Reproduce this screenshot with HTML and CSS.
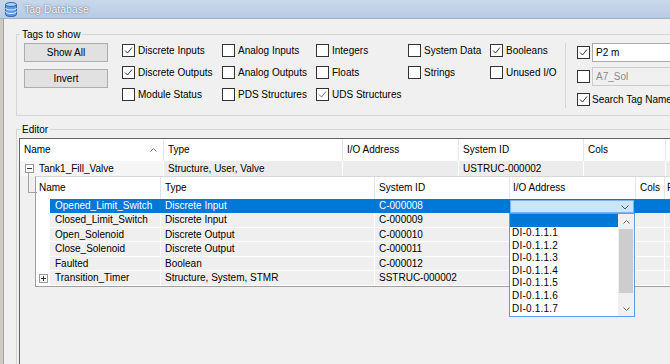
FILE: index.html
```html
<!DOCTYPE html>
<html lang="en">
<head>
  <meta charset="UTF-8">
  <title>Tag Database</title>
  <link rel="stylesheet" href="styles.css">
</head>
<body>

  <div class="titlebar">
    <svg class="app-icon" width="12" height="15" viewBox="0 0 12 15">
      <path d="M0.5 2.5 v10 a5.5 2 0 0 0 11 0 v-10" fill="#5d9be0" stroke="#2f68b0"/>
      <ellipse cx="6" cy="2.5" rx="5.5" ry="2" fill="#a9d0f5" stroke="#2f68b0"/>
      <path d="M0.5 6 a5.5 2 0 0 0 11 0 M0.5 9.5 a5.5 2 0 0 0 11 0" fill="none" stroke="#e2effc"/>
    </svg>
    <span>Tag Database</span>
  </div>

  <div class="frame">
    <div class="client">

      <fieldset class="group tags">
        <legend>Tags to show</legend>
        <div class="tags-body">
          <div class="buttons">
            <button>Show All</button>
            <button>Invert</button>
          </div>

          <div class="filters">
            <div class="col w1">
              <label class="check"><span class="box"><svg width="11" height="11" viewBox="0 0 11 11"><path d="M2 5.5 L4.5 8 L9 2.5" fill="none" stroke="#333"/></svg></span>Discrete Inputs</label>
              <label class="check"><span class="box"><svg width="11" height="11" viewBox="0 0 11 11"><path d="M2 5.5 L4.5 8 L9 2.5" fill="none" stroke="#333"/></svg></span>Discrete Outputs</label>
              <label class="check"><span class="box"></span>Module Status</label>
            </div>
            <div class="col w2">
              <label class="check"><span class="box"></span>Analog Inputs</label>
              <label class="check"><span class="box"></span>Analog Outputs</label>
              <label class="check"><span class="box"></span>PDS Structures</label>
            </div>
            <div class="col w3">
              <label class="check"><span class="box"></span>Integers</label>
              <label class="check"><span class="box"></span>Floats</label>
              <label class="check"><span class="box"><svg width="11" height="11" viewBox="0 0 11 11"><path d="M2 5.5 L4.5 8 L9 2.5" fill="none" stroke="#777"/></svg></span>UDS Structures</label>
            </div>
            <div class="col w4">
              <label class="check"><span class="box"></span>System Data</label>
              <label class="check"><span class="box"></span>Strings</label>
            </div>
            <div class="col w5">
              <label class="check"><span class="box"><svg width="11" height="11" viewBox="0 0 11 11"><path d="M2 5.5 L4.5 8 L9 2.5" fill="none" stroke="#333"/></svg></span>Booleans</label>
              <label class="check"><span class="box"></span>Unused I/O</label>
            </div>
          </div>

          <div class="search">
            <div class="search-row">
              <span class="box"><svg width="11" height="11" viewBox="0 0 11 11"><path d="M2 5.5 L4.5 8 L9 2.5" fill="none" stroke="#333"/></svg></span>
              <div class="textbox">P2 m</div>
            </div>
            <div class="search-row">
              <span class="box"></span>
              <div class="textbox disabled">A7_Sol</div>
            </div>
            <div class="search-row">
              <span class="box"><svg width="11" height="11" viewBox="0 0 11 11"><path d="M2 5.5 L4.5 8 L9 2.5" fill="none" stroke="#333"/></svg></span>
              <span>Search Tag Names</span>
            </div>
          </div>
        </div>
      </fieldset>

      <fieldset class="group editor">
        <legend>Editor</legend>
        <div class="grid">
          <div class="row outer head">
            <div class="cell name-head">Name
              <svg width="7" height="4" viewBox="0 0 7 4"><path d="M0.5 3.5 L3.5 0.5 L6.5 3.5" fill="none" stroke="#6a6a6a"/></svg>
            </div>
            <div class="cell">Type</div>
            <div class="cell">I/O Address</div>
            <div class="cell">System ID</div>
            <div class="cell">Cols</div>
            <div class="cell"></div>
          </div>

          <div class="row outer parent">
            <div class="cell first"><span class="expander minus"></span>Tank1_Fill_Valve</div>
            <div class="cell">Structure, User, Valve</div>
            <div class="cell"></div>
            <div class="cell">USTRUC-000002</div>
            <div class="cell"></div>
            <div class="cell"></div>
          </div>

          <div class="child">
            <div class="row inner head">
              <div class="cell span">Name</div>
              <div class="cell">Type</div>
              <div class="cell">System ID</div>
              <div class="cell io-head">I/O Address</div>
              <div class="cell">Cols</div>
              <div class="cell r-head">R</div>
            </div>

            <div class="row inner item sel">
              <div class="cell indent"></div>
              <div class="cell">Opened_Limit_Switch</div>
              <div class="cell">Discrete Input</div>
              <div class="cell">C-000008</div>
              <div class="cell io">
                <div class="combo">
                  <svg width="8" height="5" viewBox="0 0 8 5"><path d="M0.5 0.5 L4 4 L7.5 0.5" fill="none" stroke="#555"/></svg>
                </div>
                <div class="droplist">
                  <div class="options">
                    <div class="opt hl"></div>
                    <div class="opt">DI-0.1.1.1</div>
                    <div class="opt">DI-0.1.1.2</div>
                    <div class="opt">DI-0.1.1.3</div>
                    <div class="opt">DI-0.1.1.4</div>
                    <div class="opt">DI-0.1.1.5</div>
                    <div class="opt">DI-0.1.1.6</div>
                    <div class="opt">DI-0.1.1.7</div>
                  </div>
                  <div class="vscroll">
                    <div class="arrow"><svg width="7" height="4" viewBox="0 0 7 4"><path d="M0.5 3.5 L3.5 0.5 L6.5 3.5" fill="none" stroke="#606060"/></svg></div>
                    <div class="thumb"></div>
                    <div class="arrow down"><svg width="7" height="4" viewBox="0 0 7 4"><path d="M0.5 0.5 L3.5 3.5 L6.5 0.5" fill="none" stroke="#606060"/></svg></div>
                  </div>
                </div>
              </div>
              <div class="cell"></div>
              <div class="cell"></div>
            </div>

            <div class="row inner item">
              <div class="cell indent"></div>
              <div class="cell">Closed_Limit_Switch</div>
              <div class="cell">Discrete Input</div>
              <div class="cell">C-000009</div>
              <div class="cell"></div>
              <div class="cell"></div>
              <div class="cell"></div>
            </div>
            <div class="row inner item">
              <div class="cell indent"></div>
              <div class="cell">Open_Solenoid</div>
              <div class="cell">Discrete Output</div>
              <div class="cell">C-000010</div>
              <div class="cell"></div>
              <div class="cell"></div>
              <div class="cell"></div>
            </div>
            <div class="row inner item">
              <div class="cell indent"></div>
              <div class="cell">Close_Solenoid</div>
              <div class="cell">Discrete Output</div>
              <div class="cell">C-000011</div>
              <div class="cell"></div>
              <div class="cell"></div>
              <div class="cell"></div>
            </div>
            <div class="row inner item">
              <div class="cell indent"></div>
              <div class="cell">Faulted</div>
              <div class="cell">Boolean</div>
              <div class="cell">C-000012</div>
              <div class="cell"></div>
              <div class="cell"></div>
              <div class="cell"></div>
            </div>
            <div class="row inner item">
              <div class="cell indent"><span class="expander plus"></span></div>
              <div class="cell">Transition_Timer</div>
              <div class="cell">Structure, System, STMR</div>
              <div class="cell">SSTRUC-000002</div>
              <div class="cell"></div>
              <div class="cell"></div>
              <div class="cell"></div>
            </div>
          </div>
        </div>
      </fieldset>

    </div>
  </div>

</body>
</html>
```

FILE: styles.css
```css
* {
  box-sizing: border-box;
}

html, body {
  margin: 0;
}

body {
  width: 670px;
  height: 364px;
  overflow: hidden;
  background: #f0f0f0;
  font-family: "Liberation Sans", Arial, sans-serif;
  font-size: 10px;
  color: #000;
}

/* window chrome */

.titlebar {
  height: 19px;
  display: flex;
  align-items: center;
  gap: 7px;
  padding-left: 5px;
  background: linear-gradient(#c8d8eb, #b8cbe1);
  border-bottom: 1px solid #9fb0c4;
  font-size: 10.5px;
  color: #f7f9fc;
  text-shadow: 0 0 1px #50647c, 0 0 3px #8094aa;
}

.frame {
  height: 345px;
  border-left: 3px solid #cdcac2;
}

.client {
  width: 720px;
  height: 100%;
  padding: 9px 0 0 12px;
  border-left: 1px solid #a4a19a;
}

/* group boxes */

.group {
  margin: 0;
  padding: 0;
  min-width: 0;
  border: 1px solid #d5d5d5;
}

.group legend {
  margin-left: 3px;
  padding: 0 2px;
  line-height: 13px;
}

.tags-body {
  height: 74px;
  display: flex;
  align-items: flex-start;
  padding-left: 7px;
}

.buttons {
  width: 84px;
  margin-top: 2px;
  display: flex;
  flex-direction: column;
  gap: 7px;
}

button {
  height: 19px;
  padding: 0;
  background: #e1e1e1;
  border: 1px solid #adadad;
  font: inherit;
  color: #000;
}

.filters {
  display: flex;
  margin: -2px 0 0 14px;
}

.col {
  display: flex;
  flex-direction: column;
}

.w1 { width: 100px; }
.w2 { width: 94px; }
.w3 { width: 92px; }
.w4 { width: 82px; }
.w5 { width: 75px; }

.check {
  height: 22px;
  display: flex;
  align-items: center;
  gap: 3px;
  white-space: nowrap;
}

.box {
  width: 13px;
  height: 13px;
  flex: none;
  display: flex;
  align-items: center;
  justify-content: center;
  background: #fff;
  border: 1px solid #333;
}

.search {
  height: 65px;
  margin-top: 2px;
  padding-left: 11px;
  border-left: 1px solid #d5d5d5;
  display: flex;
  flex-direction: column;
  gap: 5px;
}

.search-row {
  height: 19px;
  display: flex;
  align-items: center;
  gap: 2px;
  white-space: nowrap;
}

.textbox {
  width: 110px;
  height: 19px;
  padding-left: 3px;
  line-height: 17px;
  background: #fff;
  border: 1px solid #a9a9a9;
}

.textbox.disabled {
  background: #f0f0f0;
  border-color: #cccccc;
  color: #8a8a8a;
}

.editor {
  margin-top: 7px;
}

/* editor grid */

.grid {
  height: 240px;
  margin: 2px 0 0 2px;
  background: #f0f0f0;
  border-top: 1px solid #646464;
  border-left: 1px solid #646464;
}

.row {
  display: grid;
}

.outer {
  grid-template-columns: 144px 179px 116px 125px 82px 80px;
}

.inner {
  grid-template-columns: 14px 111px 214px 135px 126px 29px 60px;
}

.cell {
  padding-left: 4px;
  white-space: nowrap;
  overflow: hidden;
  border-right: 1px solid #e5e5e5;
}

.head .cell {
  height: 22px;
  line-height: 22px;
  background: #fff;
}

.name-head {
  display: flex;
  align-items: center;
  justify-content: space-between;
  padding-right: 6px;
}

.parent .cell {
  height: 15px;
  line-height: 15px;
  background: #ececec;
  border-color: #fff;
}

.parent .first {
  display: flex;
  align-items: center;
  gap: 5px;
  padding-left: 5px;
  background: #f5f5f5;
}

.expander {
  width: 9px;
  height: 9px;
  flex: none;
  position: relative;
  background: #fff;
  border: 1px solid #9a9a9a;
}

.expander::before,
.expander.plus::after {
  content: "";
  position: absolute;
  left: 1px;
  top: 3px;
  width: 5px;
  height: 1px;
  background: #333;
}

.expander.plus::after {
  left: 3px;
  top: 1px;
  width: 1px;
  height: 5px;
}

.child {
  position: relative;
  margin-left: 15px;
  border-left: 1px solid #a0a0a0;
  border-top: 1px solid #d6d6d6;
  border-bottom: 1px solid #a0a0a0;
}

.child::before {
  content: "";
  position: absolute;
  left: -8px;
  top: -5px;
  width: 8px;
  height: 20px;
  border-left: 1px solid #a0a0a0;
  border-bottom: 1px solid #a0a0a0;
}

.child .head .span {
  grid-column: span 2;
  padding-left: 3px;
}

.io-head {
  padding-left: 3px;
}

.r-head {
  padding-left: 2px;
}

.item .cell {
  height: 14px;
  line-height: 13px;
  background: #efefef;
  border-right: 1px solid #fff;
  border-bottom: 1px solid #fff;
}

.item:nth-of-type(odd) .cell {
  height: 15px;
  line-height: 14px;
}

.item .cell:nth-child(2) {
  padding-left: 5px;
}

.item .indent {
  padding-left: 3px;
  display: flex;
  align-items: center;
  background: #fff;
  border-color: #fff;
}

.item.sel .cell {
  background: #0078d7;
  border-color: #0078d7;
  color: #fff;
}

.item.sel .indent {
  background: #fff;
  border-color: #fff;
}

/* combo box with open list */

.item.sel .io {
  position: relative;
  overflow: visible;
  padding: 1px 1px 0 0;
}

.combo {
  height: 13px;
  display: flex;
  align-items: flex-end;
  justify-content: flex-end;
  padding: 0 4px 2px 0;
  background: #cce4f7;
  border: 1px solid #7eb4ea;
}

.droplist {
  position: absolute;
  left: -1px;
  top: 14px;
  width: 126px;
  height: 104px;
  display: flex;
  background: #fff;
  border: 1px solid #5a9fe3;
  color: #000;
  z-index: 2;
}

.options {
  flex: 1;
}

.opt {
  height: 12.6px;
  line-height: 12.6px;
  padding-left: 2px;
  letter-spacing: 0.2px;
}

.opt.hl {
  height: 13px;
  background: #0078d7;
}

.vscroll {
  width: 16px;
  display: flex;
  flex-direction: column;
  background: #f0f0f0;
}

.arrow {
  height: 15px;
  display: flex;
  align-items: center;
  justify-content: center;
}

.arrow.down {
  margin-top: auto;
}

.thumb {
  height: 64px;
  margin: 0 1px;
  background: #cdcdcd;
}
```
